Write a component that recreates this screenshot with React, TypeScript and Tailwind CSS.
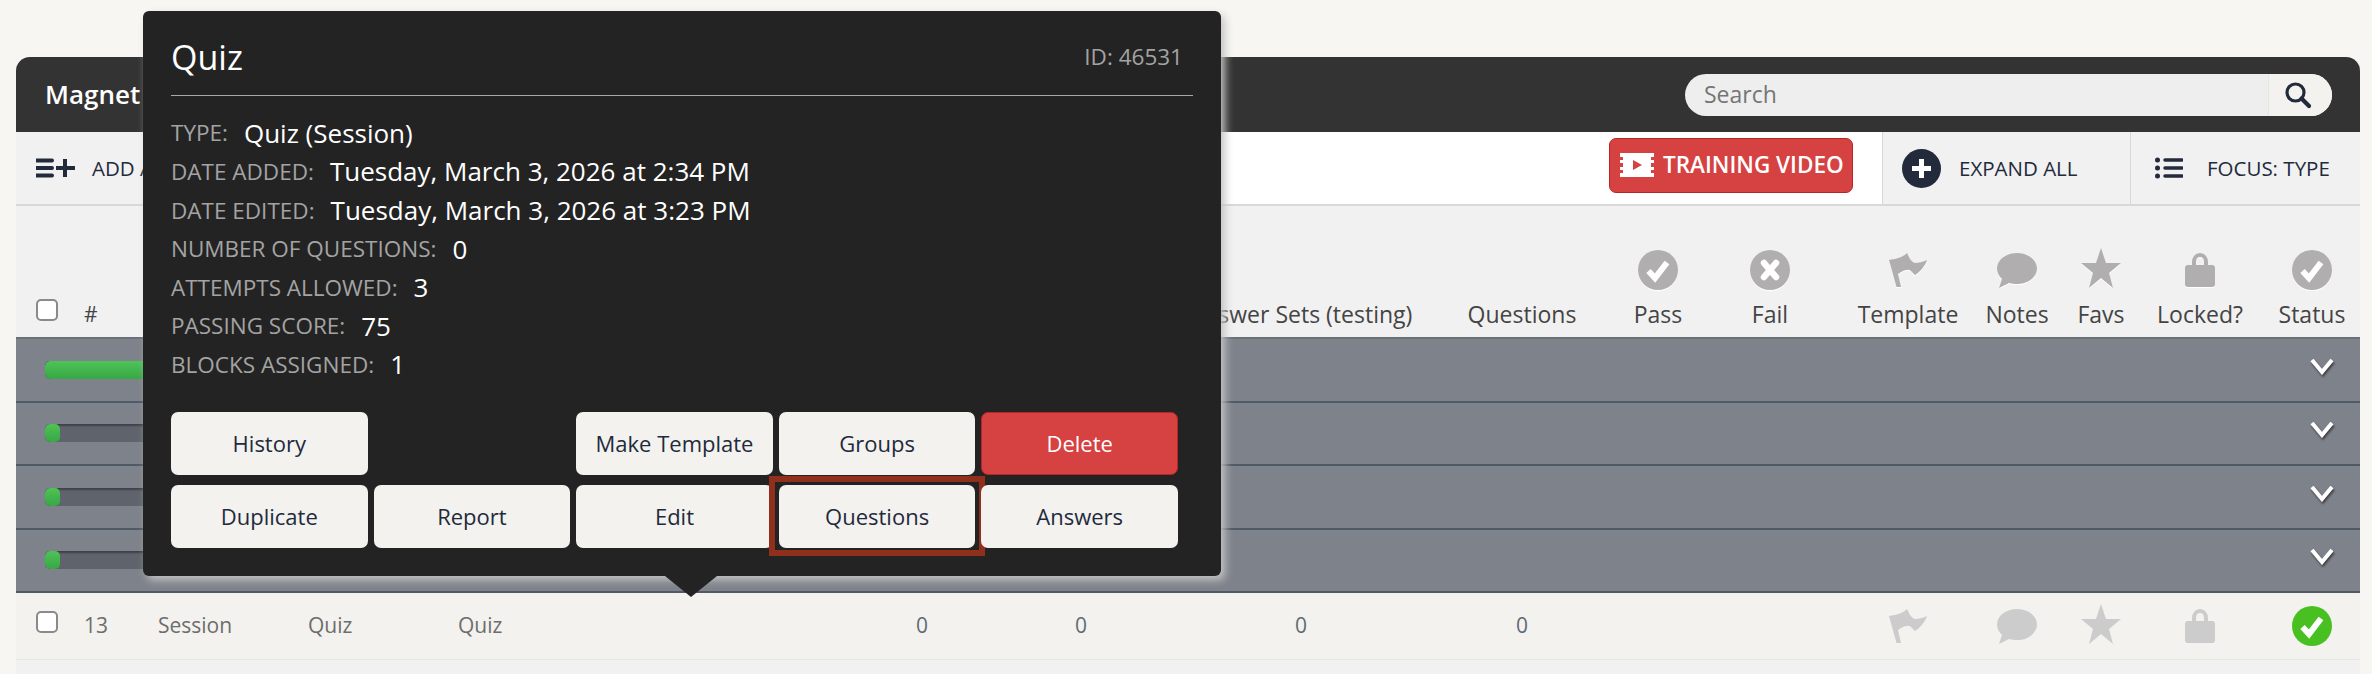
import React from "react";

const columns =
  "grid grid-cols-[68px_74px_150px_150px_406px_116px_202px_238px_204px_68px_156px_120px_98px_70px_128px_96px]";

function CheckCircle({ color = "#b0aeae" }: { color?: string }) {
  return (
    <svg width="40" height="40" viewBox="0 0 40 40" className="block">
      <circle cx="20" cy="20" r="20" fill={color} />
      <path d="M10.5 21 L17 28 L29 12.5" fill="none" stroke="#fff" strokeWidth="6" />
    </svg>
  );
}

function XCircle() {
  return (
    <svg width="40" height="40" viewBox="0 0 40 40" className="block">
      <circle cx="20" cy="20" r="20" fill="#b0aeae" />
      <path d="M14 13 L26 27 M26 13 L14 27" fill="none" stroke="#fff" strokeWidth="6.5" strokeLinecap="round" />
    </svg>
  );
}

function Flag({ color }: { color: string }) {
  return (
    <svg width="38" height="34" viewBox="0 0 38 34" className="block">
      <path
        d="M0 7 C6 6 13 5 18 0 C20 4 22 9 26 10 C30 10 34 9 38 7 C36 13 31 19 26 22 C23 20 22 16 18 17 C15 17 12 19 9 21 L12 34 L7.5 34 Z"
        fill={color}
      />
    </svg>
  );
}

function Bubble({ color }: { color: string }) {
  return (
    <svg width="42" height="35" viewBox="0 0 42 35" className="block">
      <path
        d="M21 0 C32 0 41 7 41 15.5 C41 24 32 31 22 31 C18 31 15 30.5 13 30 L3 35 L6 26 C3 23 1 20 1 15.5 C1 7 10 0 21 0 Z"
        fill={color}
      />
    </svg>
  );
}

function Star({ color }: { color: string }) {
  return (
    <svg width="40" height="40" viewBox="0 0 40 40" className="block -translate-y-[2px]">
      <path d="M20 0 L25 15 L40 15 L28 25 L32 40 L20 30 L8 40 L12 25 L0 15 L15 15 Z" fill={color} />
    </svg>
  );
}

function Lock({ color }: { color: string }) {
  return (
    <svg width="30" height="34" viewBox="0 0 30 34" className="block">
      <path d="M9 13 V9 C9 5 11.5 2 15 2 C18.5 2 21 5 21 9 V13" fill="none" stroke={color} strokeWidth="4" />
      <rect x="0" y="12" width="30" height="22" rx="3" fill={color} />
    </svg>
  );
}

function Chevron() {
  return (
    <svg
      width="24"
      height="16"
      viewBox="0 0 24 16"
      className="block -translate-y-[3px] [filter:drop-shadow(1px_2px_1px_rgba(30,30,30,0.7))]"
    >
      <path d="M2 1 L12 13 L22 1" fill="none" stroke="#fff" strokeWidth="4" />
    </svg>
  );
}

function FilmIcon() {
  return (
    <svg width="34" height="24" viewBox="0 0 34 24" className="block">
      <path
        d="M0 0 H34 V4 H31 V7 H34 V10 H31 V14 H34 V17 H31 V20 H34 V24 H0 V20 H3 V17 H0 V14 H3 V10 H0 V7 H3 V4 H0 Z"
        fill="#fff"
      />
      <path d="M13 7 L22 12 L13 17 Z" fill="#d64141" />
    </svg>
  );
}

function HeaderCell({ label, icon }: { label?: string; icon?: React.ReactNode }) {
  return (
    <div className="flex flex-col items-center justify-end">
      {icon && <div className="mb-[10px] flex h-[40px] items-center [filter:drop-shadow(0_1px_0_#fff)]">{icon}</div>}
      {label && <span className="whitespace-nowrap text-[23px] leading-[28px] text-[#444444]">{label}</span>}
    </div>
  );
}

function GroupRow({ fill }: { fill: string }) {
  return (
    <div className="flex h-[63.5px] items-center justify-between border-b-2 border-[#4f5a66] bg-[#7e828a] pl-[29px] pr-[26px]">
      <div className="h-[18px] w-[360px] overflow-hidden rounded-[5px] bg-[#5f636b] shadow-[inset_0_2px_2px_rgba(0,0,0,0.35)]">
        <div className={`h-full rounded-[5px] bg-gradient-to-b from-[#4fc257] to-[#36a845] ${fill}`} />
      </div>
      <Chevron />
    </div>
  );
}

function PopupButton({ label, className = "" }: { label: string; className?: string }) {
  return (
    <button
      className={`relative flex h-[63px] items-center justify-center rounded-[7px] bg-[#f3f2ee] text-[22px] text-[#222a3c] ${className}`}
    >
      {label}
    </button>
  );
}

function InfoLine({ label, value }: { label: string; value: string }) {
  return (
    <div className="flex h-[38.6px] items-center gap-[16px]">
      <span className="text-[22.5px] uppercase text-[#a3a3a3]">{label}:</span>
      <span className="text-[26px] text-white">{value}</span>
    </div>
  );
}

export default function App() {
  return (
    <div className="relative h-[674px] overflow-hidden bg-[#f7f6f2] px-[16px] pt-[57px] font-['Open_Sans',sans-serif] text-[#444444]">
      <div className="w-[2344px]">
        <header className="flex h-[75px] items-center justify-between rounded-t-[14px] bg-[#333333] pl-[29px] pr-[28px]">
          <h1 className="text-[26px] font-semibold text-white">Magnet</h1>
          <div className="flex h-[42px] w-[647px] overflow-hidden rounded-full bg-[#eeeeee]">
            <div className="flex flex-1 items-center pl-[19px] text-[23px] text-[#757575]">Search</div>
            <div className="flex w-[64px] items-center justify-center border-l border-[#e6e6e0] bg-[#f3f2ee] pr-[6px]">
              <svg width="28" height="28" viewBox="0 0 28 28" className="block">
                <circle cx="11.5" cy="11.5" r="8.5" fill="none" stroke="#222a3c" strokeWidth="3.2" />
                <path d="M17.5 17.5 L25 25" stroke="#222a3c" strokeWidth="4.2" strokeLinecap="round" />
              </svg>
            </div>
          </div>
        </header>

        <div className="flex h-[74px] items-stretch border-b-2 border-[#d8d8d8] bg-white">
          <div className="flex w-[400px] items-center gap-[16px] bg-[#f1f1f1] pl-[20px]">
            <svg width="40" height="20" viewBox="0 0 40 20" className="block">
              <path d="M0 2.5 H16 M0 10 H16 M0 17.5 H16" stroke="#222a3c" strokeWidth="4" strokeLinecap="round" />
              <path d="M29 1 V19 M20 10 H39" stroke="#222a3c" strokeWidth="4" />
            </svg>
            <span className="text-[20.5px] font-medium text-[#222a3c]">ADD A</span>
          </div>
          <div className="flex flex-1 items-start justify-end pr-[29px] pt-[6px]">
            <button className="flex h-[55px] w-[244px] items-center gap-[9px] whitespace-nowrap rounded-[7px] border border-[#b92525] bg-[#d64141] pb-[2px] pl-[10px] text-[22.5px] font-semibold text-white">
              <FilmIcon />
              TRAINING VIDEO
            </button>
          </div>
          <div className="flex w-[248px] items-center gap-[18px] border-l border-[#d8d8d8] bg-[#f1f1f1] pl-[19px]">
            <svg width="39" height="39" viewBox="0 0 39 39" className="block">
              <circle cx="19.5" cy="19.5" r="19.5" fill="#222a3c" />
              <path d="M19.5 10 V29 M10 19.5 H29" stroke="#fff" strokeWidth="5" />
            </svg>
            <span className="text-[20.5px] font-medium text-[#222a3c]">EXPAND ALL</span>
          </div>
          <div className="flex w-[230px] items-center gap-[24px] border-l border-[#d8d8d8] bg-[#f1f1f1] pl-[24px]">
            <svg width="28" height="22" viewBox="0 0 28 22" className="block">
              <circle cx="2.5" cy="3" r="2.5" fill="#222a3c" />
              <circle cx="2.5" cy="11" r="2.5" fill="#222a3c" />
              <circle cx="2.5" cy="19" r="2.5" fill="#222a3c" />
              <path d="M10 3 H27 M10 11 H27 M10 19 H27" stroke="#222a3c" strokeWidth="3.5" strokeLinecap="round" />
            </svg>
            <span className="text-[20.5px] font-medium text-[#222a3c]">FOCUS: TYPE</span>
          </div>
        </div>

        <div className={`${columns} h-[131px] items-end bg-[#f1f1f1] pb-[9px]`}>
          <div className="pb-[7px] pl-[20px]">
            <div className="h-[22px] w-[22px] rounded-[5px] border-2 border-[#8a8a8a] bg-white" />
          </div>
          <span className="text-[21px] leading-[28px] text-[#444444]">#</span>
          <HeaderCell />
          <HeaderCell />
          <HeaderCell />
          <HeaderCell />
          <HeaderCell />
          <HeaderCell label="Answer Sets (testing)" />
          <HeaderCell label="Questions" />
          <HeaderCell label="Pass" icon={<CheckCircle />} />
          <HeaderCell label="Fail" icon={<XCircle />} />
          <HeaderCell label="Template" icon={<Flag color="#b0aeae" />} />
          <HeaderCell label="Notes" icon={<Bubble color="#b0aeae" />} />
          <HeaderCell label="Favs" icon={<Star color="#b0aeae" />} />
          <HeaderCell label="Locked?" icon={<Lock color="#b0aeae" />} />
          <HeaderCell label="Status" icon={<CheckCircle />} />
        </div>

        <div className="border-t-2 border-[#6a7078]">
          <GroupRow fill="w-full" />
          <GroupRow fill="w-[15px]" />
          <GroupRow fill="w-[15px]" />
          <GroupRow fill="w-[15px]" />
        </div>

        <div className={`${columns} h-[67px] items-center border-b border-[#e6e6e6] bg-[#f3f2ee] text-[21px] text-[#6d6d6d]`}>
          <div className="pl-[20px]">
            <div className="h-[22px] w-[22px] -translate-y-[4px] rounded-[5px] border-2 border-[#8a8a8a] bg-white" />
          </div>
          <span>13</span>
          <span>Session</span>
          <span>Quiz</span>
          <span>Quiz</span>
          {[0, 1, 2, 3].map((i) => (
            <span key={i} className="text-center text-[#616a75]">
              0
            </span>
          ))}
          <span />
          <span />
          <div className="flex justify-center">
            <Flag color="#cccccc" />
          </div>
          <div className="flex justify-center">
            <Bubble color="#cccccc" />
          </div>
          <div className="flex justify-center">
            <Star color="#cccccc" />
          </div>
          <div className="flex justify-center">
            <Lock color="#cccccc" />
          </div>
          <div className="flex justify-center">
            <CheckCircle color="#48c022" />
          </div>
        </div>
        <div className="h-[20px] bg-[#f1f1f1]" />
      </div>

      <div className="absolute left-[143px] top-[11px] z-10 w-[1078px] rounded-[6px] bg-[#232323] px-[28px] pb-[28px] shadow-[4px_4px_8px_#c4c4c4]">
        <div className="flex h-[85px] items-center justify-between border-b border-[#a8a8a8] pt-[8px]">
          <h2 className="text-[34px] font-medium text-white">Quiz</h2>
          <span className="pr-[10px] text-[22.5px] text-[#a3a3a3]">ID: 46531</span>
        </div>
        <div className="mt-[18px]">
          <InfoLine label="Type" value="Quiz (Session)" />
          <InfoLine label="Date Added" value="Tuesday, March 3, 2026 at 2:34 PM" />
          <InfoLine label="Date Edited" value="Tuesday, March 3, 2026 at 3:23 PM" />
          <InfoLine label="Number of Questions" value="0" />
          <InfoLine label="Attempts Allowed" value="3" />
          <InfoLine label="Passing Score" value="75" />
          <InfoLine label="Blocks Assigned" value="1" />
        </div>
        <div className="mt-[28px] grid w-[1007px] grid-cols-5 gap-x-[6px] gap-y-[10px]">
          <PopupButton label="History" />
          <PopupButton label="Make Template" className="col-start-3" />
          <PopupButton label="Groups" />
          <PopupButton label="Delete" className="border border-[#b92525] !bg-[#d64141] font-medium !text-white" />
          <PopupButton label="Duplicate" />
          <PopupButton label="Report" />
          <PopupButton label="Edit" />
          <div className="relative">
            <PopupButton label="Questions" className="w-full" />
            <div className="absolute -bottom-[8px] -left-[10px] -right-[10px] -top-[9px] border-[6px] border-[#8f2f1c]" />
          </div>
          <PopupButton label="Answers" />
        </div>
        <div className="absolute -bottom-[21px] left-[522px] h-0 w-0 border-x-[26px] border-t-[21px] border-x-transparent border-t-[#232323]" />
      </div>
    </div>
  );
}
